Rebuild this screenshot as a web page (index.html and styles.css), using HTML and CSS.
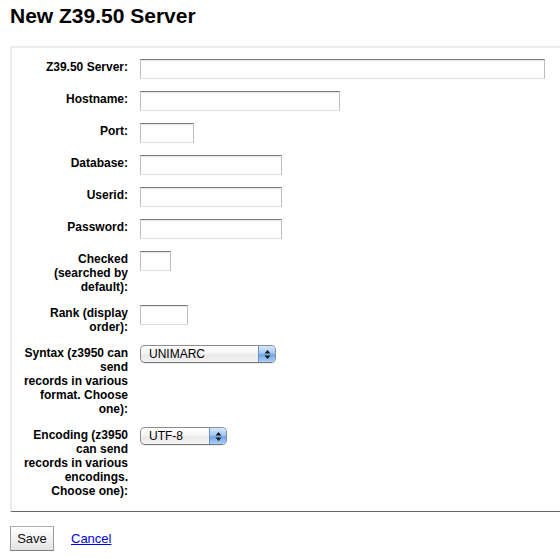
FILE: index.html
```html
<!DOCTYPE html>
<html lang="en">
<head>
<meta charset="utf-8">
<title>New Z39.50 Server</title>
<link rel="stylesheet" href="styles.css">
</head>
<body>
<h1 class="title">New Z39.50 Server</h1>
<form class="form" action="#">
  <fieldset class="rows">
    <ol class="fields">
      <li class="row"><label class="lbl" for="name">Z39.50 Server:</label><input class="txt w-server" id="name" type="text"></li>
      <li class="row"><label class="lbl" for="host">Hostname:</label><input class="txt w-host" id="host" type="text"></li>
      <li class="row"><label class="lbl" for="port">Port:</label><input class="txt w-port" id="port" type="text"></li>
      <li class="row"><label class="lbl" for="db">Database:</label><input class="txt w-mid" id="db" type="text"></li>
      <li class="row"><label class="lbl" for="userid">Userid:</label><input class="txt w-mid" id="userid" type="text"></li>
      <li class="row"><label class="lbl" for="password">Password:</label><input class="txt w-mid" id="password" type="password"></li>
      <li class="row"><label class="lbl" for="checked">Checked (searched by default):</label><input class="txt w-check" id="checked" type="text"></li>
      <li class="row"><label class="lbl" for="rank">Rank (display order):</label><input class="txt w-rank" id="rank" type="text"></li>
      <li class="row"><label class="lbl" for="syntax">Syntax (z3950 can send<br>records in various format. Choose one):</label>
        <span class="sel w-syntax"><select class="sel-input" id="syntax"><option>UNIMARC</option><option>USMARC</option></select><span class="sel-arrow"><svg width="7" height="11" viewBox="0 0 7 11"><path d="M0.5 4.5 L3.5 1 L6.5 4.5 Z M0.5 6.5 L3.5 10 L6.5 6.5 Z" fill="#1a1a1a"/></svg></span></span></li>
      <li class="row"><label class="lbl" for="encoding">Encoding (z3950 can send<br>records in various encodings. Choose one):</label>
        <span class="sel w-enc"><select class="sel-input" id="encoding"><option>UTF-8</option><option>MARC-8</option></select><span class="sel-arrow"><svg width="7" height="11" viewBox="0 0 7 11"><path d="M0.5 4.5 L3.5 1 L6.5 4.5 Z M0.5 6.5 L3.5 10 L6.5 6.5 Z" fill="#1a1a1a"/></svg></span></span></li>
    </ol>
  </fieldset>
  <div class="actions">
    <input class="btn" type="submit" value="Save">
    <a class="cancel" href="#">Cancel</a>
  </div>
</form>
</body>
</html>
```
FILE: styles.css
```css
* { box-sizing: border-box; }

body {
  margin: 0;
  padding: 0 0 0 10px;
  font-family: "Liberation Sans", Arial, Helvetica, sans-serif;
  color: #000;
  background: #fff;
}

.title {
  font-size: 21px;
  line-height: 24px;
  font-weight: bold;
  margin: 4px 0 0 0;
}

.form { margin: 0; }

.rows {
  margin: 18px 0 0 0;
  min-inline-size: 0;
  border: 0;
  border-left: 2px solid #ececec;
  border-top: 2px solid #ececec;
  border-bottom: 1px solid #666;
  padding: 11px 0 14px 8px;
}

.fields {
  list-style: none;
  margin: 0;
  padding: 0;
  display: flex;
  flex-direction: column;
  gap: 12px;
}

.row {
  display: flex;
  align-items: flex-start;
  gap: 12px;
}

.lbl {
  width: 108px;
  flex: none;
  text-align: right;
  font-weight: bold;
  font-size: 12px;
  line-height: 14px;
  padding-top: 1px;
  margin-bottom: -1px;
}

.txt {
  height: 20px;
  margin: 0;
  padding: 1px 3px;
  font: 12px "Liberation Sans", Arial, sans-serif;
  border: 1px solid;
  border-color: #7a7a7a #bdbdbd #dcdcdc #bdbdbd;
  box-shadow: inset 0 1px 0 #e8e8e8;
  background: #fff;
}

.w-server { width: 405px; }
.w-host { width: 200px; }
.w-port { width: 54px; }
.w-mid { width: 142px; }
.w-check { width: 31px; }
.w-rank { width: 48px; }

.sel {
  display: flex;
  height: 18px;
  border: 1px solid #8c8c8c;
  border-bottom-color: #777;
  border-radius: 5px;
  overflow: hidden;
  background: linear-gradient(#ffffff, #f6f6f6 45%, #e9e9e9 55%, #f4f4f4);
  box-shadow: 0 1px 0 rgba(0,0,0,0.08);
}

.w-syntax { width: 136px; }
.w-enc { width: 87px; }

.sel-input {
  -webkit-appearance: none;
  appearance: none;
  flex: 1;
  min-width: 0;
  border: 0;
  margin: 0;
  padding: 0 0 0 8px;
  background: transparent;
  font: 12px "Liberation Sans", Arial, sans-serif;
  line-height: 16px;
  height: 16px;
  color: #000;
}

.sel-arrow {
  width: 17px;
  flex: none;
  display: flex;
  align-items: center;
  justify-content: center;
  border-left: 1px solid #6f8fbf;
  background: linear-gradient(#d6e8fc, #a3c9f3 45%, #6fa6e8 55%, #a9d1f7);
}

.actions {
  margin: 14px 0 0 0;
  display: flex;
  align-items: center;
  gap: 17px;
}

.btn {
  width: 44px;
  height: 25px;
  margin: 0;
  padding: 0;
  font: 13px "Liberation Sans", Arial, sans-serif;
  color: #111;
  border: 1px solid;
  border-color: #b0b0b0 #9a9a9a #7e7e7e #9a9a9a;
  border-radius: 0;
  background: linear-gradient(#ffffff, #f2f2f2 50%, #e4e4e4);
}

.cancel {
  font-size: 13px;
  color: #0000ee;
  text-decoration: underline;
}
```
